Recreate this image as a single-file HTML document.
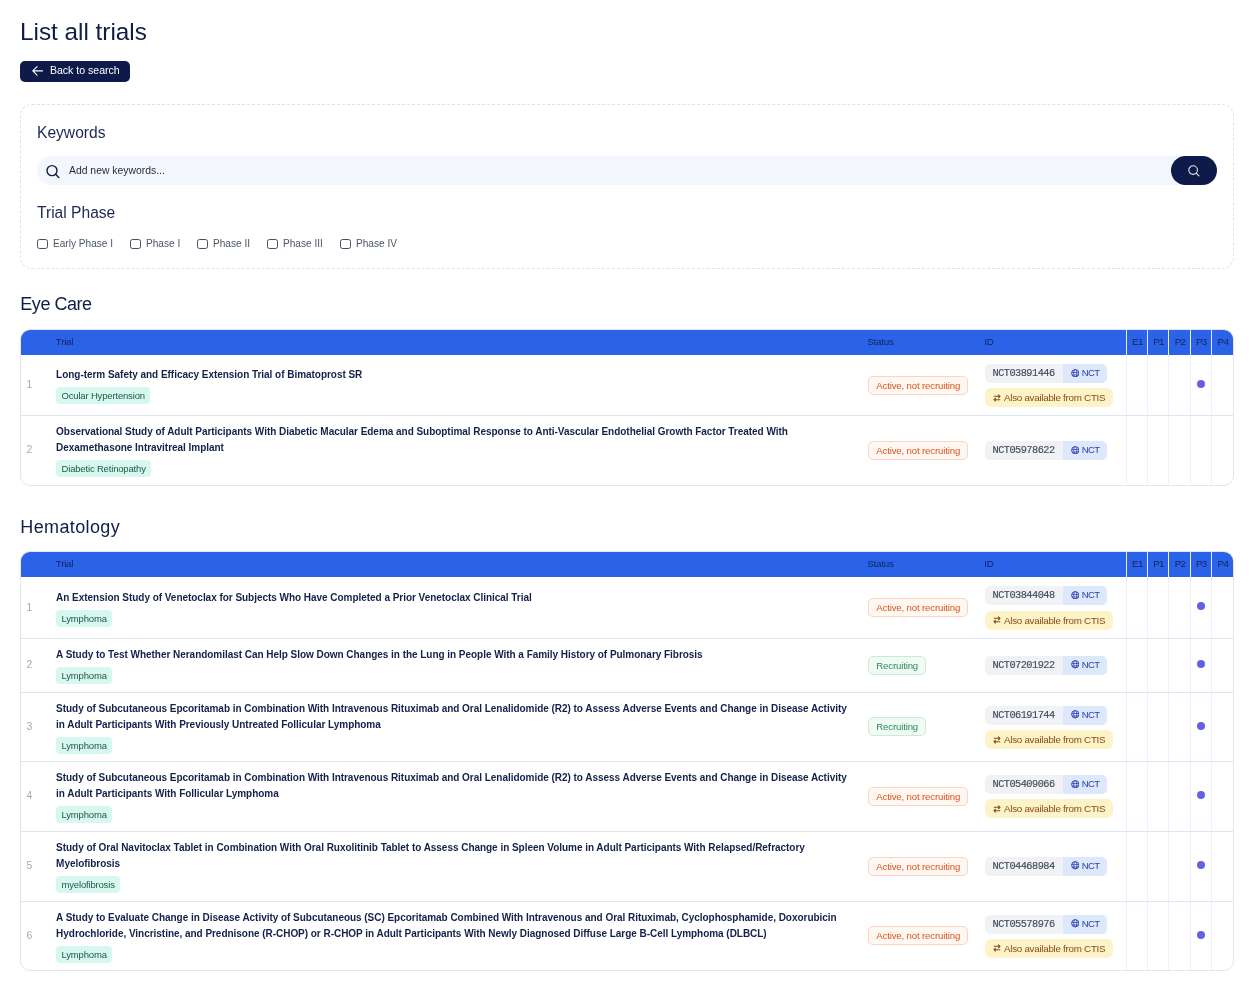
<!DOCTYPE html>
<html><head><meta charset="utf-8"><title>List all trials</title><style>
html,body{margin:0;padding:0;background:#ffffff;}
body{width:1258px;height:990px;position:relative;overflow:hidden;will-change:transform;font-family:"Liberation Sans", sans-serif;}
.t{position:absolute;white-space:nowrap;line-height:20px;}
.b{position:absolute;}
.tag{position:absolute;height:16px;line-height:16px;padding-top:1px !important;padding:0 5.5px;background:#d6f8ef;color:#27574a;font-size:9.5px;letter-spacing:-0.17px;border-radius:4px;white-space:nowrap;}
.st{position:absolute;height:17px;line-height:18.5px;padding:0 7.25px;border:1px solid;font-size:9.6px;letter-spacing:-0.14px;border-radius:5px;white-space:nowrap;}
.st-a{background:#fff7f1;border-color:#fbd5c0;color:#d6561d;}
.st-r{background:#effbf4;border-color:#c9ecd7;color:#2f8a55;}
.idp{position:absolute;height:19px;display:flex;border-radius:5px;overflow:hidden;white-space:nowrap;}
.idn{display:block;background:#f0f2f5;color:#434c5a;-webkit-text-stroke:0.15px #434c5a;font-family:"Liberation Mono", monospace;font-size:10.3px;letter-spacing:-0.55px;line-height:19px;padding:0 7.6px 0 7.6px;width:62.8px;}
.idb{display:block;background:#dde8fb;color:#2b3fae;font-size:9.5px;letter-spacing:-0.6px;line-height:17px;height:19px;padding:0 7.5px 0 7.7px;}
.ctis{position:absolute;height:19px;line-height:19px;padding:0 7.5px 0 8px;background:#fdf3c8;color:#8a4a17;font-size:9.8px;letter-spacing:-0.27px;border-radius:6px;white-space:nowrap;}
</style></head><body>
<div class="t" style="left:20.00px;top:21.58px;font-size:24.3px;color:#0f1d47;font-weight:400;font-family:'Liberation Sans', sans-serif;">List all trials</div>
<div class="b" style="left:20.00px;top:61.00px;width:110.00px;height:20.60px;background:#0e1b4a;border-radius:5px;"></div>
<svg class="b" style="left:31px;top:65.4px" width="13" height="11" viewBox="0 0 13 11"><path d="M11.5 5.9H1.8M6.1 1.6L1.8 5.9L6.1 10.2" fill="none" stroke="#fff" stroke-width="1.1" stroke-linecap="round" stroke-linejoin="round"/></svg>
<div class="t" style="left:49.90px;top:60.24px;font-size:10.55px;color:#ffffff;font-weight:400;font-family:'Liberation Sans', sans-serif;">Back to search</div>
<div class="b" style="left:20.00px;top:104.00px;width:1213.50px;height:164.50px;border:1px dashed #dfe2e8;border-radius:12px;box-sizing:border-box;"></div>
<div class="t" style="left:37.00px;top:122.79px;font-size:15.6px;color:#1a2853;font-weight:400;font-family:'Liberation Sans', sans-serif;">Keywords</div>
<div class="b" style="left:37.00px;top:156.00px;width:1165.00px;height:29.00px;background:#f3f6fd;border-radius:14.5px;"></div>
<svg class="b" style="left:45px;top:164px" width="16" height="15" viewBox="0 0 16 15"><circle cx="7" cy="6.6" r="5" fill="none" stroke="#0f1d47" stroke-width="1.4"/><path d="M10.6 10.2L13.8 13.4" stroke="#0f1d47" stroke-width="1.4" stroke-linecap="round"/></svg>
<div class="t" style="left:69.00px;top:161.40px;font-size:10.4px;color:#1f2937;font-weight:400;font-family:'Liberation Sans', sans-serif;">Add new keywords...</div>
<div class="b" style="left:1171.00px;top:156.00px;width:46.00px;height:29.00px;background:#0e1b4a;border-radius:14.5px;"></div>
<svg class="b" style="left:1186px;top:163px" width="15" height="15" viewBox="0 0 15 15"><circle cx="7.1" cy="7.1" r="4.3" fill="none" stroke="#e5e7eb" stroke-width="1.1"/><path d="M10.2 10.2L12.9 12.9" stroke="#e5e7eb" stroke-width="1.1" stroke-linecap="round"/></svg>
<div class="t" style="left:37.00px;top:202.59px;font-size:15.6px;color:#1a2853;font-weight:400;font-family:'Liberation Sans', sans-serif;">Trial Phase</div>
<div class="b" style="left:37.00px;top:239.00px;width:11.00px;height:10.20px;border:1px solid #434d68;border-radius:2.5px;box-sizing:border-box;"></div>
<div class="t" style="left:53.00px;top:233.60px;font-size:10.1px;color:#4b5563;font-weight:400;font-family:'Liberation Sans', sans-serif;">Early Phase I</div>
<div class="b" style="left:130.00px;top:239.00px;width:11.00px;height:10.20px;border:1px solid #434d68;border-radius:2.5px;box-sizing:border-box;"></div>
<div class="t" style="left:146.00px;top:233.60px;font-size:10.1px;color:#4b5563;font-weight:400;font-family:'Liberation Sans', sans-serif;">Phase I</div>
<div class="b" style="left:197.00px;top:239.00px;width:11.00px;height:10.20px;border:1px solid #434d68;border-radius:2.5px;box-sizing:border-box;"></div>
<div class="t" style="left:213.00px;top:233.60px;font-size:10.1px;color:#4b5563;font-weight:400;font-family:'Liberation Sans', sans-serif;">Phase II</div>
<div class="b" style="left:267.00px;top:239.00px;width:11.00px;height:10.20px;border:1px solid #434d68;border-radius:2.5px;box-sizing:border-box;"></div>
<div class="t" style="left:283.00px;top:233.60px;font-size:10.1px;color:#4b5563;font-weight:400;font-family:'Liberation Sans', sans-serif;">Phase III</div>
<div class="b" style="left:340.00px;top:239.00px;width:11.00px;height:10.20px;border:1px solid #434d68;border-radius:2.5px;box-sizing:border-box;"></div>
<div class="t" style="left:356.00px;top:233.60px;font-size:10.1px;color:#4b5563;font-weight:400;font-family:'Liberation Sans', sans-serif;">Phase IV</div>
<div class="t" style="left:20.30px;top:293.76px;font-size:18px;color:#0f1d47;font-weight:400;font-family:'Liberation Sans', sans-serif;letter-spacing:-0.46px;">Eye Care</div>
<div class="b" style="left:20.00px;top:329.00px;width:1214.00px;height:157.00px;border:1px solid #e4e6ec;border-radius:10px;box-sizing:border-box;"></div>
<div class="b" style="left:21.00px;top:330.00px;width:1212.00px;height:25.00px;background:#2b63e8;border-radius:9px 9px 0 0;"></div>
<div class="t" style="left:55.80px;top:331.50px;font-size:9.8px;color:#14225a;font-weight:400;font-family:'Liberation Sans', sans-serif;letter-spacing:-0.25px;">Trial</div>
<div class="t" style="left:867.30px;top:331.50px;font-size:9.8px;color:#14225a;font-weight:400;font-family:'Liberation Sans', sans-serif;letter-spacing:-0.25px;">Status</div>
<div class="t" style="left:984.20px;top:331.50px;font-size:9.8px;color:#14225a;font-weight:400;font-family:'Liberation Sans', sans-serif;letter-spacing:-0.25px;">ID</div>
<div class="t" style="left:1126.50px;width:21.00px;text-align:center;top:331.50px;font-size:9.8px;letter-spacing:-0.7px;text-indent:0.7px;color:#14225a">E1</div>
<div class="t" style="left:1147.50px;width:21.40px;text-align:center;top:331.50px;font-size:9.8px;letter-spacing:-0.7px;text-indent:0.7px;color:#14225a">P1</div>
<div class="t" style="left:1168.90px;width:21.40px;text-align:center;top:331.50px;font-size:9.8px;letter-spacing:-0.7px;text-indent:0.7px;color:#14225a">P2</div>
<div class="t" style="left:1190.30px;width:21.20px;text-align:center;top:331.50px;font-size:9.8px;letter-spacing:-0.7px;text-indent:0.7px;color:#14225a">P3</div>
<div class="t" style="left:1211.50px;width:22.00px;text-align:center;top:331.50px;font-size:9.8px;letter-spacing:-0.7px;text-indent:0.7px;color:#14225a">P4</div>
<div class="b" style="left:1126.00px;top:329.00px;width:1.00px;height:25.80px;background:#e9eefa;"></div>
<div class="b" style="left:1147.00px;top:329.00px;width:1.00px;height:25.80px;background:#e9eefa;"></div>
<div class="b" style="left:1168.40px;top:329.00px;width:1.00px;height:25.80px;background:#e9eefa;"></div>
<div class="b" style="left:1189.80px;top:329.00px;width:1.00px;height:25.80px;background:#e9eefa;"></div>
<div class="b" style="left:1211.00px;top:329.00px;width:1.00px;height:25.80px;background:#e9eefa;"></div>
<div class="b" style="left:1126.00px;top:354.80px;width:1.00px;height:130.10px;background:#ecf0fb;"></div>
<div class="b" style="left:1147.00px;top:354.80px;width:1.00px;height:130.10px;background:#ecf0fb;"></div>
<div class="b" style="left:1168.40px;top:354.80px;width:1.00px;height:130.10px;background:#ecf0fb;"></div>
<div class="b" style="left:1189.80px;top:354.80px;width:1.00px;height:130.10px;background:#ecf0fb;"></div>
<div class="b" style="left:1211.00px;top:354.80px;width:1.00px;height:130.10px;background:#ecf0fb;"></div>
<div class="b" style="left:20.50px;top:415.10px;width:1212.50px;height:1.00px;background:#dde5f7;"></div>
<div class="t" style="left:26.60px;top:374.95px;font-size:10.4px;color:#a3a9b6;font-weight:400;font-family:'Liberation Sans', sans-serif;">1</div>
<div class="t" style="left:56.1px;top:366.75px;line-height:16px;font-size:10px;letter-spacing:-0.035px;font-weight:700;color:#13214b">Long-term Safety and Efficacy Extension Trial of Bimatoprost SR</div>
<div class="tag" style="left:56px;top:387.00px">Ocular Hypertension</div>
<div class="st st-a" style="left:868px;top:376px">Active, not recruiting</div>
<div class="idp" style="left:985px;top:364.10px"><span class="idn">NCT03891446</span><span class="idb"><svg width="8.5" height="8.5" viewBox="0 0 10 10" style="margin-right:2.6px;vertical-align:-1px"><circle cx="5" cy="5" r="4.3" fill="none" stroke="#2b3fae" stroke-width="1.1"/><ellipse cx="5" cy="5" rx="1.9" ry="4.3" fill="none" stroke="#2b3fae" stroke-width="0.9"/><path d="M0.9 4.2H9.1M1.6 7H8.4" fill="none" stroke="#2b3fae" stroke-width="0.9"/></svg>NCT</span></div>
<div class="ctis" style="left:985px;top:388.30px"><svg width="8" height="8" viewBox="0 0 8 8" style="margin-right:3px;vertical-align:-0.5px"><path d="M0.8 2.3H7M5.2 0.6L7 2.3L5.2 4M7.2 5.7H1M2.8 4L1 5.7L2.8 7.4" fill="none" stroke="#8a4a17" stroke-width="1.1" stroke-linejoin="round"/></svg>Also available from CTIS</div>
<div class="b" style="left:1197.00px;top:379.95px;width:8.20px;height:8.20px;background:#6361e3;border-radius:50%;"></div>
<div class="t" style="left:26.60px;top:440.25px;font-size:10.4px;color:#a3a9b6;font-weight:400;font-family:'Liberation Sans', sans-serif;">2</div>
<div class="t" style="left:56.1px;top:423.75px;line-height:16px;font-size:10px;letter-spacing:-0.035px;font-weight:700;color:#13214b">Observational Study of Adult Participants With Diabetic Macular Edema and Suboptimal Response to Anti-Vascular Endothelial Growth Factor Treated With</div>
<div class="t" style="left:56.1px;top:439.75px;line-height:16px;font-size:10px;letter-spacing:-0.035px;font-weight:700;color:#13214b">Dexamethasone Intravitreal Implant</div>
<div class="tag" style="left:56px;top:460.00px">Diabetic Retinopathy</div>
<div class="st st-a" style="left:868px;top:441px">Active, not recruiting</div>
<div class="idp" style="left:985px;top:441.05px"><span class="idn">NCT05978622</span><span class="idb"><svg width="8.5" height="8.5" viewBox="0 0 10 10" style="margin-right:2.6px;vertical-align:-1px"><circle cx="5" cy="5" r="4.3" fill="none" stroke="#2b3fae" stroke-width="1.1"/><ellipse cx="5" cy="5" rx="1.9" ry="4.3" fill="none" stroke="#2b3fae" stroke-width="0.9"/><path d="M0.9 4.2H9.1M1.6 7H8.4" fill="none" stroke="#2b3fae" stroke-width="0.9"/></svg>NCT</span></div>
<div class="t" style="left:20.30px;top:517.06px;font-size:18px;color:#0f1d47;font-weight:400;font-family:'Liberation Sans', sans-serif;letter-spacing:0.38px;">Hematology</div>
<div class="b" style="left:20.00px;top:551.00px;width:1214.00px;height:420.00px;border:1px solid #e4e6ec;border-radius:10px;box-sizing:border-box;"></div>
<div class="b" style="left:21.00px;top:552.00px;width:1212.00px;height:25.00px;background:#2b63e8;border-radius:9px 9px 0 0;"></div>
<div class="t" style="left:55.80px;top:553.50px;font-size:9.8px;color:#14225a;font-weight:400;font-family:'Liberation Sans', sans-serif;letter-spacing:-0.25px;">Trial</div>
<div class="t" style="left:867.30px;top:553.50px;font-size:9.8px;color:#14225a;font-weight:400;font-family:'Liberation Sans', sans-serif;letter-spacing:-0.25px;">Status</div>
<div class="t" style="left:984.20px;top:553.50px;font-size:9.8px;color:#14225a;font-weight:400;font-family:'Liberation Sans', sans-serif;letter-spacing:-0.25px;">ID</div>
<div class="t" style="left:1126.50px;width:21.00px;text-align:center;top:553.50px;font-size:9.8px;letter-spacing:-0.7px;text-indent:0.7px;color:#14225a">E1</div>
<div class="t" style="left:1147.50px;width:21.40px;text-align:center;top:553.50px;font-size:9.8px;letter-spacing:-0.7px;text-indent:0.7px;color:#14225a">P1</div>
<div class="t" style="left:1168.90px;width:21.40px;text-align:center;top:553.50px;font-size:9.8px;letter-spacing:-0.7px;text-indent:0.7px;color:#14225a">P2</div>
<div class="t" style="left:1190.30px;width:21.20px;text-align:center;top:553.50px;font-size:9.8px;letter-spacing:-0.7px;text-indent:0.7px;color:#14225a">P3</div>
<div class="t" style="left:1211.50px;width:22.00px;text-align:center;top:553.50px;font-size:9.8px;letter-spacing:-0.7px;text-indent:0.7px;color:#14225a">P4</div>
<div class="b" style="left:1126.00px;top:551.00px;width:1.00px;height:25.80px;background:#e9eefa;"></div>
<div class="b" style="left:1147.00px;top:551.00px;width:1.00px;height:25.80px;background:#e9eefa;"></div>
<div class="b" style="left:1168.40px;top:551.00px;width:1.00px;height:25.80px;background:#e9eefa;"></div>
<div class="b" style="left:1189.80px;top:551.00px;width:1.00px;height:25.80px;background:#e9eefa;"></div>
<div class="b" style="left:1211.00px;top:551.00px;width:1.00px;height:25.80px;background:#e9eefa;"></div>
<div class="b" style="left:1126.00px;top:576.80px;width:1.00px;height:393.10px;background:#ecf0fb;"></div>
<div class="b" style="left:1147.00px;top:576.80px;width:1.00px;height:393.10px;background:#ecf0fb;"></div>
<div class="b" style="left:1168.40px;top:576.80px;width:1.00px;height:393.10px;background:#ecf0fb;"></div>
<div class="b" style="left:1189.80px;top:576.80px;width:1.00px;height:393.10px;background:#ecf0fb;"></div>
<div class="b" style="left:1211.00px;top:576.80px;width:1.00px;height:393.10px;background:#ecf0fb;"></div>
<div class="b" style="left:20.50px;top:637.80px;width:1212.50px;height:1.00px;background:#dde5f7;"></div>
<div class="b" style="left:20.50px;top:691.90px;width:1212.50px;height:1.00px;background:#dde5f7;"></div>
<div class="b" style="left:20.50px;top:761.00px;width:1212.50px;height:1.00px;background:#dde5f7;"></div>
<div class="b" style="left:20.50px;top:830.70px;width:1212.50px;height:1.00px;background:#dde5f7;"></div>
<div class="b" style="left:20.50px;top:900.80px;width:1212.50px;height:1.00px;background:#dde5f7;"></div>
<div class="t" style="left:26.60px;top:598.30px;font-size:10.4px;color:#a3a9b6;font-weight:400;font-family:'Liberation Sans', sans-serif;">1</div>
<div class="t" style="left:56.1px;top:589.75px;line-height:16px;font-size:10px;letter-spacing:-0.035px;font-weight:700;color:#13214b">An Extension Study of Venetoclax for Subjects Who Have Completed a Prior Venetoclax Clinical Trial</div>
<div class="tag" style="left:56px;top:610.00px">Lymphoma</div>
<div class="st st-a" style="left:868px;top:598px">Active, not recruiting</div>
<div class="idp" style="left:985px;top:586.45px"><span class="idn">NCT03844048</span><span class="idb"><svg width="8.5" height="8.5" viewBox="0 0 10 10" style="margin-right:2.6px;vertical-align:-1px"><circle cx="5" cy="5" r="4.3" fill="none" stroke="#2b3fae" stroke-width="1.1"/><ellipse cx="5" cy="5" rx="1.9" ry="4.3" fill="none" stroke="#2b3fae" stroke-width="0.9"/><path d="M0.9 4.2H9.1M1.6 7H8.4" fill="none" stroke="#2b3fae" stroke-width="0.9"/></svg>NCT</span></div>
<div class="ctis" style="left:985px;top:610.65px"><svg width="8" height="8" viewBox="0 0 8 8" style="margin-right:3px;vertical-align:-0.5px"><path d="M0.8 2.3H7M5.2 0.6L7 2.3L5.2 4M7.2 5.7H1M2.8 4L1 5.7L2.8 7.4" fill="none" stroke="#8a4a17" stroke-width="1.1" stroke-linejoin="round"/></svg>Also available from CTIS</div>
<div class="b" style="left:1197.00px;top:602.30px;width:8.20px;height:8.20px;background:#6361e3;border-radius:50%;"></div>
<div class="t" style="left:26.60px;top:655.10px;font-size:10.4px;color:#a3a9b6;font-weight:400;font-family:'Liberation Sans', sans-serif;">2</div>
<div class="t" style="left:56.1px;top:646.75px;line-height:16px;font-size:10px;letter-spacing:-0.035px;font-weight:700;color:#13214b">A Study to Test Whether Nerandomilast Can Help Slow Down Changes in the Lung in People With a Family History of Pulmonary Fibrosis</div>
<div class="tag" style="left:56px;top:667.00px">Lymphoma</div>
<div class="st st-r" style="left:868px;top:656px">Recruiting</div>
<div class="idp" style="left:985px;top:655.90px"><span class="idn">NCT07201922</span><span class="idb"><svg width="8.5" height="8.5" viewBox="0 0 10 10" style="margin-right:2.6px;vertical-align:-1px"><circle cx="5" cy="5" r="4.3" fill="none" stroke="#2b3fae" stroke-width="1.1"/><ellipse cx="5" cy="5" rx="1.9" ry="4.3" fill="none" stroke="#2b3fae" stroke-width="0.9"/><path d="M0.9 4.2H9.1M1.6 7H8.4" fill="none" stroke="#2b3fae" stroke-width="0.9"/></svg>NCT</span></div>
<div class="b" style="left:1197.00px;top:660.10px;width:8.20px;height:8.20px;background:#6361e3;border-radius:50%;"></div>
<div class="t" style="left:26.60px;top:716.70px;font-size:10.4px;color:#a3a9b6;font-weight:400;font-family:'Liberation Sans', sans-serif;">3</div>
<div class="t" style="left:56.1px;top:700.75px;line-height:16px;font-size:10px;letter-spacing:-0.035px;font-weight:700;color:#13214b">Study of Subcutaneous Epcoritamab in Combination With Intravenous Rituximab and Oral Lenalidomide (R2) to Assess Adverse Events and Change in Disease Activity</div>
<div class="t" style="left:56.1px;top:716.75px;line-height:16px;font-size:10px;letter-spacing:-0.035px;font-weight:700;color:#13214b">in Adult Participants With Previously Untreated Follicular Lymphoma</div>
<div class="tag" style="left:56px;top:737.00px">Lymphoma</div>
<div class="st st-r" style="left:868px;top:717px">Recruiting</div>
<div class="idp" style="left:985px;top:705.85px"><span class="idn">NCT06191744</span><span class="idb"><svg width="8.5" height="8.5" viewBox="0 0 10 10" style="margin-right:2.6px;vertical-align:-1px"><circle cx="5" cy="5" r="4.3" fill="none" stroke="#2b3fae" stroke-width="1.1"/><ellipse cx="5" cy="5" rx="1.9" ry="4.3" fill="none" stroke="#2b3fae" stroke-width="0.9"/><path d="M0.9 4.2H9.1M1.6 7H8.4" fill="none" stroke="#2b3fae" stroke-width="0.9"/></svg>NCT</span></div>
<div class="ctis" style="left:985px;top:730.05px"><svg width="8" height="8" viewBox="0 0 8 8" style="margin-right:3px;vertical-align:-0.5px"><path d="M0.8 2.3H7M5.2 0.6L7 2.3L5.2 4M7.2 5.7H1M2.8 4L1 5.7L2.8 7.4" fill="none" stroke="#8a4a17" stroke-width="1.1" stroke-linejoin="round"/></svg>Also available from CTIS</div>
<div class="b" style="left:1197.00px;top:721.70px;width:8.20px;height:8.20px;background:#6361e3;border-radius:50%;"></div>
<div class="t" style="left:26.60px;top:786.10px;font-size:10.4px;color:#a3a9b6;font-weight:400;font-family:'Liberation Sans', sans-serif;">4</div>
<div class="t" style="left:56.1px;top:769.75px;line-height:16px;font-size:10px;letter-spacing:-0.035px;font-weight:700;color:#13214b">Study of Subcutaneous Epcoritamab in Combination With Intravenous Rituximab and Oral Lenalidomide (R2) to Assess Adverse Events and Change in Disease Activity</div>
<div class="t" style="left:56.1px;top:785.75px;line-height:16px;font-size:10px;letter-spacing:-0.035px;font-weight:700;color:#13214b">in Adult Participants With Follicular Lymphoma</div>
<div class="tag" style="left:56px;top:806.00px">Lymphoma</div>
<div class="st st-a" style="left:868px;top:787px">Active, not recruiting</div>
<div class="idp" style="left:985px;top:775.25px"><span class="idn">NCT05409066</span><span class="idb"><svg width="8.5" height="8.5" viewBox="0 0 10 10" style="margin-right:2.6px;vertical-align:-1px"><circle cx="5" cy="5" r="4.3" fill="none" stroke="#2b3fae" stroke-width="1.1"/><ellipse cx="5" cy="5" rx="1.9" ry="4.3" fill="none" stroke="#2b3fae" stroke-width="0.9"/><path d="M0.9 4.2H9.1M1.6 7H8.4" fill="none" stroke="#2b3fae" stroke-width="0.9"/></svg>NCT</span></div>
<div class="ctis" style="left:985px;top:799.45px"><svg width="8" height="8" viewBox="0 0 8 8" style="margin-right:3px;vertical-align:-0.5px"><path d="M0.8 2.3H7M5.2 0.6L7 2.3L5.2 4M7.2 5.7H1M2.8 4L1 5.7L2.8 7.4" fill="none" stroke="#8a4a17" stroke-width="1.1" stroke-linejoin="round"/></svg>Also available from CTIS</div>
<div class="b" style="left:1197.00px;top:791.10px;width:8.20px;height:8.20px;background:#6361e3;border-radius:50%;"></div>
<div class="t" style="left:26.60px;top:856.00px;font-size:10.4px;color:#a3a9b6;font-weight:400;font-family:'Liberation Sans', sans-serif;">5</div>
<div class="t" style="left:56.1px;top:839.75px;line-height:16px;font-size:10px;letter-spacing:-0.035px;font-weight:700;color:#13214b">Study of Oral Navitoclax Tablet in Combination With Oral Ruxolitinib Tablet to Assess Change in Spleen Volume in Adult Participants With Relapsed/Refractory</div>
<div class="t" style="left:56.1px;top:855.75px;line-height:16px;font-size:10px;letter-spacing:-0.035px;font-weight:700;color:#13214b">Myelofibrosis</div>
<div class="tag" style="left:56px;top:876.00px">myelofibrosis</div>
<div class="st st-a" style="left:868px;top:857px">Active, not recruiting</div>
<div class="idp" style="left:985px;top:856.80px"><span class="idn">NCT04468984</span><span class="idb"><svg width="8.5" height="8.5" viewBox="0 0 10 10" style="margin-right:2.6px;vertical-align:-1px"><circle cx="5" cy="5" r="4.3" fill="none" stroke="#2b3fae" stroke-width="1.1"/><ellipse cx="5" cy="5" rx="1.9" ry="4.3" fill="none" stroke="#2b3fae" stroke-width="0.9"/><path d="M0.9 4.2H9.1M1.6 7H8.4" fill="none" stroke="#2b3fae" stroke-width="0.9"/></svg>NCT</span></div>
<div class="b" style="left:1197.00px;top:861.00px;width:8.20px;height:8.20px;background:#6361e3;border-radius:50%;"></div>
<div class="t" style="left:26.60px;top:925.60px;font-size:10.4px;color:#a3a9b6;font-weight:400;font-family:'Liberation Sans', sans-serif;">6</div>
<div class="t" style="left:56.1px;top:909.75px;line-height:16px;font-size:10px;letter-spacing:-0.035px;font-weight:700;color:#13214b">A Study to Evaluate Change in Disease Activity of Subcutaneous (SC) Epcoritamab Combined With Intravenous and Oral Rituximab, Cyclophosphamide, Doxorubicin</div>
<div class="t" style="left:56.1px;top:925.75px;line-height:16px;font-size:10px;letter-spacing:-0.035px;font-weight:700;color:#13214b">Hydrochloride, Vincristine, and Prednisone (R-CHOP) or R-CHOP in Adult Participants With Newly Diagnosed Diffuse Large B-Cell Lymphoma (DLBCL)</div>
<div class="tag" style="left:56px;top:946.00px">Lymphoma</div>
<div class="st st-a" style="left:868px;top:926px">Active, not recruiting</div>
<div class="idp" style="left:985px;top:914.75px"><span class="idn">NCT05578976</span><span class="idb"><svg width="8.5" height="8.5" viewBox="0 0 10 10" style="margin-right:2.6px;vertical-align:-1px"><circle cx="5" cy="5" r="4.3" fill="none" stroke="#2b3fae" stroke-width="1.1"/><ellipse cx="5" cy="5" rx="1.9" ry="4.3" fill="none" stroke="#2b3fae" stroke-width="0.9"/><path d="M0.9 4.2H9.1M1.6 7H8.4" fill="none" stroke="#2b3fae" stroke-width="0.9"/></svg>NCT</span></div>
<div class="ctis" style="left:985px;top:938.95px"><svg width="8" height="8" viewBox="0 0 8 8" style="margin-right:3px;vertical-align:-0.5px"><path d="M0.8 2.3H7M5.2 0.6L7 2.3L5.2 4M7.2 5.7H1M2.8 4L1 5.7L2.8 7.4" fill="none" stroke="#8a4a17" stroke-width="1.1" stroke-linejoin="round"/></svg>Also available from CTIS</div>
<div class="b" style="left:1197.00px;top:930.60px;width:8.20px;height:8.20px;background:#6361e3;border-radius:50%;"></div>
</body></html>
